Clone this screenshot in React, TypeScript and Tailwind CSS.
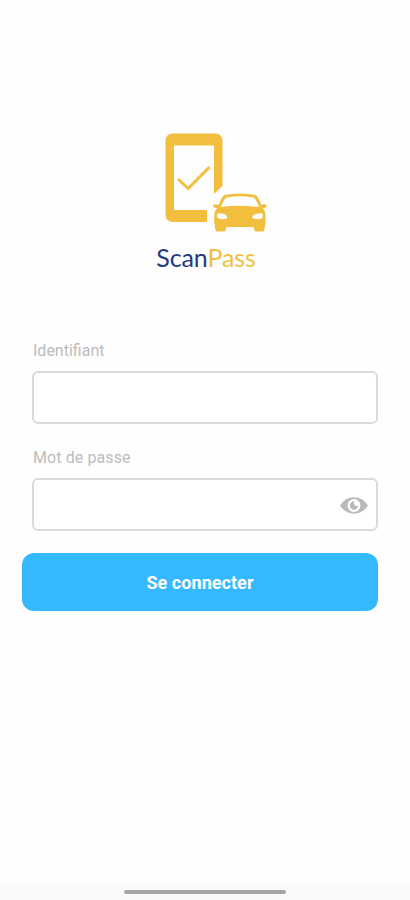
import { useState } from "react";

function Logo() {
  return (
    <svg width="102" height="99" viewBox="0 0 102 99" fill="none" aria-hidden="true">
      {/* phone */}
      <path
        d="M8 .5H50Q57.5 .5 57.5 8V53L49 61V12.5H9V77H42V89H8Q.5 89 .5 81V8Q.5 .5 8 .5Z"
        fill="#f2be3e"
      />
      <path d="M13 46L23.2 55.5L44.5 34" stroke="#f2be3e" strokeWidth="3" />
      {/* car */}
      <path
        fillRule="evenodd"
        fill="#f2be3e"
        d="M59.5 62Q75 59 90.5 62Q94 64.5 96.2 72.2Q98.5 70.5 101.5 72V73.5Q100.5 75 98 75.2Q100.5 78 100.5 82V89L99.5 96Q99.3 98.5 97.5 98.5H91Q89.3 98.5 89 96L88.5 94H61.5L61 96Q60.5 98.5 59 98.5H52.5Q50.5 98.5 50.3 96L49.2 89V82Q49.2 78 52 75.2Q49.3 75 48 73.5V72Q51 70.5 53.8 72.2Q56 64.5 59.5 62ZM61.5 64.5Q58.5 66.5 56 74Q75 71.5 94 74Q91.5 66.5 88.5 64.5Q75 62 61.5 64.5ZM53 80Q51 83 53.2 85.5Q59 87 62.5 84.9Q62.3 82.5 59.5 81ZM97 80L90.500 81Q87 82.500 87.300 84.900Q91 87 96.800 85.500Q99 83 97 80Z"
      />
    </svg>
  );
}

function EyeIcon() {
  return (
    <svg width="28" height="17" viewBox="0 0 28 17" aria-hidden="true">
      <path d="M0 8.500Q5.500 .3 14 .3T28 8.500Q22.500 16.700 14 16.700T0 8.500Z" fill="#b9b9b9" />
      <circle cx="14" cy="8.500" r="6.500" fill="#fff" />
      <path d="M14 4.300A4.200 4.200 0 1 0 18.200 8.500Q16.500 9.600 15 8.500Q13.500 6.700 14 4.300Z" fill="#b9b9b9" />
    </svg>
  );
}

export default function App() {
  const [visible, setVisible] = useState(false);

  return (
    <main className="flex h-[900px] w-full flex-col bg-[#fefefe] font-['Roboto',sans-serif]">
      <header className="flex flex-col items-center pt-[133px]">
        <div className="ml-[21px]">
          <Logo />
        </div>
        <h1 className="mt-[9px] mb-px ml-[2px] font-['Lato',sans-serif] text-[25px] leading-8 tracking-[-0.1px] text-[#253b80]">
          Scan<span className="text-[#f2be3e]">Pass</span>
        </h1>
      </header>

      <form className="mt-[66px] flex flex-col pr-8 pl-[22px]" onSubmit={(e) => e.preventDefault()}>
        <div className="flex flex-col pl-[10px]">
          <label htmlFor="login" className="h-[31px] pl-px text-[16px] leading-[21px] text-[#bcbcbc]">
            Identifiant
          </label>
          <input
            id="login"
            className="h-[53px] rounded-[6px] border-2 border-[#dadada] bg-white px-3 outline-none"
          />
          <label htmlFor="password" className="mt-[23px] h-[31px] pl-px text-[16px] leading-[21px] tracking-[0.1px] text-[#bcbcbc]">
            Mot de passe
          </label>
          <div className="flex h-[53px] items-center rounded-[6px] border-2 border-[#dadada] bg-white pt-px pr-2">
            <input
              id="password"
              type={visible ? "text" : "password"}
              className="h-full min-w-0 flex-1 px-3 outline-none"
            />
            <button type="button" aria-label="Afficher le mot de passe" onClick={() => setVisible(!visible)}>
              <EyeIcon />
            </button>
          </div>
        </div>
        <button
          type="submit"
          className="mt-[22px] h-[58px] rounded-[12px] bg-[#34b9ff] text-[18px] font-bold tracking-[0.05px] text-white"
        >
          Se connecter
        </button>
      </form>

      <footer className="mt-auto flex h-[15px] justify-center bg-[#fafafa] pt-[5px]">
        <div className="h-1 w-[162px] rounded-full bg-[#a5a5a5]" />
      </footer>
    </main>
  );
}
